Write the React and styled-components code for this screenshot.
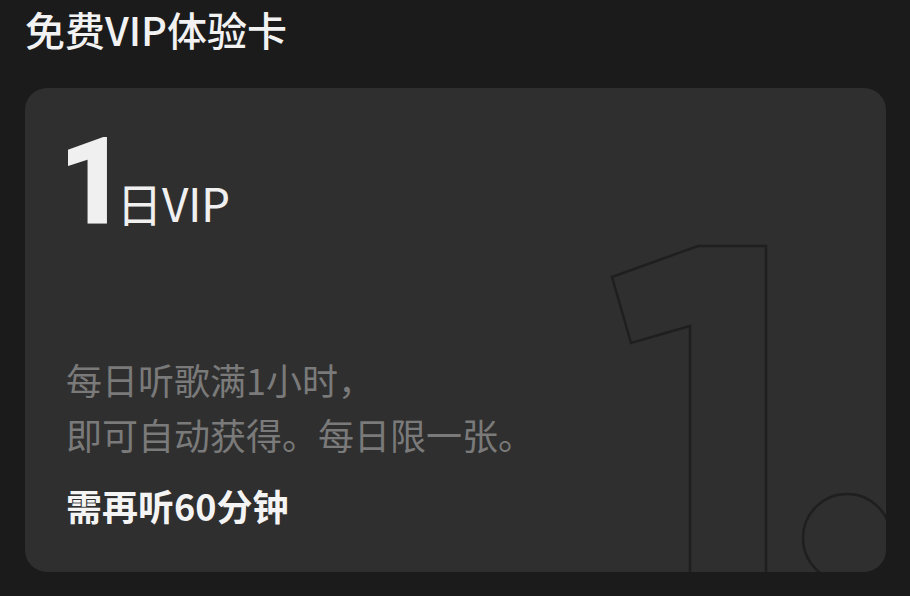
import React from "react";
import styled, { createGlobalStyle } from "styled-components";

const GlobalStyle = createGlobalStyle`
  html, body {
    margin: 0;
    padding: 0;
    background: #1b1b1b;
  }
  body {
    font-family: "Noto Sans CJK SC", "Noto Sans", sans-serif;
  }
`;

const Page = styled.div`
  width: 910px;
  height: 596px;
  overflow: hidden;
  background: #1b1b1b;
  padding: 0 24px 0 25px;
  box-sizing: border-box;
`;

const Title = styled.h2`
  margin: 0;
  height: 88px;
  font-size: 40px;
  font-weight: 500;
  line-height: 58px;
  color: #f2f2f2;
`;

const Card = styled.div`
  position: relative;
  height: 484px;
  border-radius: 22px;
  background: #2f2f2f;
  overflow: hidden;
  padding: 36px 41px 0;
  box-sizing: border-box;
`;

const Headline = styled.div`
  display: flex;
  align-items: baseline;
  color: #f0f0f0;
  position: relative;
  z-index: 1;
`;

const BigDigit = styled.span`
  font-family: Roboto, "Noto Sans", sans-serif;
  font-size: 116px;
  font-weight: 700;
  line-height: 1;
  margin-left: -6px;
  -webkit-text-stroke: 3px #f0f0f0;
`;

const Unit = styled.span`
  font-size: 46px;
  font-weight: 400;
  margin-left: -10px;
  letter-spacing: -0.5px;
`;

const Desc = styled.p`
  margin: 112px 0 0;
  font-size: 36px;
  line-height: 55px;
  color: #7a7a7a;
  position: relative;
  z-index: 1;
`;

const Remain = styled.p`
  margin: 18px 0 0;
  font-size: 36px;
  font-weight: 700;
  line-height: 50px;
  color: #f4f4f4;
  position: relative;
  z-index: 1;
`;

const Watermark = styled.svg`
  position: absolute;
  left: 0;
  top: 0;
  width: 861px;
  height: 484px;
  pointer-events: none;
`;

export default function App() {
  return (
    <>
      <GlobalStyle />
      <Page>
        <Title>免费VIP体验卡</Title>
        <Card>
          <Watermark viewBox="0 0 861 484">
            <polygon
              points="587,189 673,158 741,158 741,500 665,500 665,238 606,255"
              fill="none"
              stroke="#1f1f1f"
              strokeWidth="2.5"
            />
            <circle cx="822" cy="450" r="44" fill="none" stroke="#1f1f1f" strokeWidth="2.5" />
          </Watermark>
          <Headline>
            <BigDigit>1</BigDigit>
            <Unit>日VIP</Unit>
          </Headline>
          <Desc>
            每日听歌满1小时，
            <br />
            即可自动获得。每日限一张。
          </Desc>
          <Remain>需再听60分钟</Remain>
        </Card>
      </Page>
    </>
  );
}
